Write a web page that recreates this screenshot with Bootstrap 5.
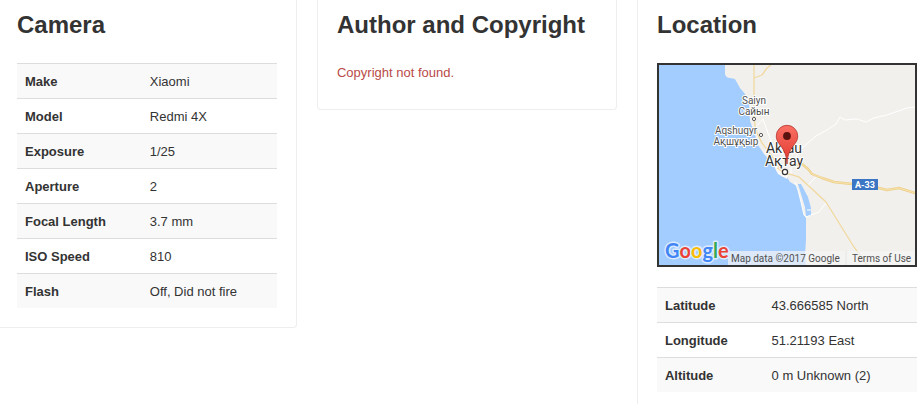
<!DOCTYPE html>
<html lang="en">
<head>
<meta charset="utf-8">
<meta name="viewport" content="width=device-width, initial-scale=1">
<title>Photo details</title>
<link rel="stylesheet" href="https://cdn.jsdelivr.net/npm/bootstrap@5.3.0/dist/css/bootstrap.min.css">
<style>
body { font-family: "Liberation Sans", Arial, sans-serif; font-size: 13px; line-height: 18px; color: #333; }
.info-row { --bs-gutter-x: 20px; margin-left: -13px; margin-right: -23px; }
.info-card { border: 1px solid #eee; border-top: 0; border-radius: 0 0 4px 4px; padding: 7px 19px 19px; }
.info-title { font-size: 24px; line-height: 36px; margin-bottom: 20px; color: #333; }
.info-table { --bs-table-striped-bg: #f9f9f9; --bs-table-color: #333; --bs-table-striped-color: #333; }
.info-table > tbody > tr > * { border-width: 1px 0 0; border-color: #ddd; padding: 9px 8px 7px; }
.w-key { width: 48%; }
.w-key-sm { width: 41%; }
.missing { color: #b94a48; padding-top: 1px; margin-bottom: 8px; }
.map-box { border: 2px solid #333; background: #f1f0ed; margin-bottom: 20px; }
.map-box text { font-family: Roboto, "Noto Sans", sans-serif; }
.map-town { font-size: 10px; text-anchor: middle; fill: #505050; stroke: #fff; stroke-width: 2px; paint-order: stroke; stroke-linejoin: round; }
.map-city { font-size: 14px; fill: #333; }
.map-note { font-size: 10px; fill: #505050; }
.map-shield { font-size: 9px; font-weight: 700; text-anchor: middle; fill: #fff; }
.map-box .map-brand { font-family: Lato, sans-serif; font-size: 20px; font-weight: 700; stroke: #dcebff; stroke-width: 3px; paint-order: stroke; stroke-linejoin: round; }
</style>
</head>
<body>
<main class="overflow-hidden">
<div class="row info-row align-items-start">
  <section class="col-4">
    <div class="info-card">
      <h2 class="info-title fw-bold">Camera</h2>
      <table class="table table-striped info-table mb-0">
        <tbody>
          <tr><th scope="row" class="w-key">Make</th><td>Xiaomi</td></tr>
          <tr><th scope="row">Model</th><td>Redmi 4X</td></tr>
          <tr><th scope="row">Exposure</th><td>1/25</td></tr>
          <tr><th scope="row">Aperture</th><td>2</td></tr>
          <tr><th scope="row">Focal Length</th><td>3.7 mm</td></tr>
          <tr><th scope="row">ISO Speed</th><td>810</td></tr>
          <tr><th scope="row">Flash</th><td>Off, Did not fire</td></tr>
        </tbody>
      </table>
    </div>
  </section>
  <section class="col-4">
    <div class="info-card">
      <h2 class="info-title fw-bold">Author and Copyright</h2>
      <p class="missing">Copyright not found.</p>
    </div>
  </section>
  <section class="col-4">
    <div class="info-card">
      <h2 class="info-title fw-bold">Location</h2>
      <div class="map-box">
        <svg class="d-block w-100" viewBox="0 0 256 200" aria-label="Map of Aktau">
          <defs>
            <linearGradient id="pinFill" x1="0" y1="0" x2="0" y2="1">
              <stop offset="0" stop-color="#fb7064"/>
              <stop offset="1" stop-color="#e0362d"/>
            </linearGradient>
          </defs>
          <!-- land and sea -->
          <rect width="256" height="200" fill="#f1f0ed"/>
          <path fill="#a3ccff" d="M0 0H66V9Q67 13 71 13L76 14 81 23 86 29 90 39 91 56 96 70 99 80 105 89 114 99 118 107 124 112 128 112 131 117 138 121 142 137 145 150 147 153 147 175 146 190 147 200H0Z"/>
          <path fill="#fbfaf8" d="M114 98 124 104 129 110 128 114 119 109Z"/>
          <path fill="#a3ccff" d="M139 119 142 119 149 132 152 143V151H147L146 142Z"/>
          <path fill="none" stroke="#fff" stroke-width="1" d="M136 117 139 125 142 137 145 150 148 153 M148 145 152 145"/>
          <!-- minor roads -->
          <g fill="none" stroke="#fff" stroke-width="1">
            <path d="M137 92 143 83 157 71 168 65 177 59 181 52 186 55 198 54 207 57 215 53 228 50 248 43 256 42"/>
            <path d="M95 64 104 54 109 68 117 88M157 112 149 120M167 138 160 147 147 152M132 98V110"/>
          </g>
          <!-- main roads -->
          <g fill="none" stroke="#f1d9a0" stroke-width="1.3" stroke-linejoin="round">
            <path d="M95 0V54L97 66 103 78 112 90 121 104M95 13 103 10 108 3 112 0"/>
            <path d="M118 103 126 108 140 112 152 123 167 137 195 182 208 200"/>
          </g>
          <path fill="none" stroke="#eccf8a" stroke-width="2.4" stroke-linejoin="round" d="M131 101 136 100 143 99 149 104 153 109 163 113 175 117 193 119 220 123 228 125 240 123 256 128"/>
          <path fill="none" stroke="#f8e3ad" stroke-width="1" stroke-linejoin="round" d="M131 101 136 100 143 99 149 104 153 109 163 113 175 117 193 119 220 123 228 125 240 123 256 128"/>
          <rect x="193" y="114" width="26" height="11" fill="#3b76c4"/>
          <text class="map-shield" x="206" y="123">A-33</text>
          <!-- towns -->
          <g fill="#fff" stroke="#555" stroke-width="1">
            <circle cx="95" cy="54" r="1.6"/>
            <circle cx="102" cy="70" r="1.6"/>
            <circle cx="126" cy="107" r="2.6" stroke="#333" stroke-width="1.2"/>
          </g>
          <text class="map-town" x="95" y="39">Saiyn</text>
          <text class="map-town" x="95" y="50">Сайын</text>
          <text class="map-town" x="77" y="69">Aqshuqyr</text>
          <text class="map-town" x="77" y="80">Ақшұқыр</text>
          <text class="map-town map-city" x="125" y="88">Aktau</text>
          <text class="map-town map-city" x="125" y="101">Ақтау</text>
          <!-- marker -->
          <path fill="url(#pinFill)" stroke="#b3342c" stroke-width=".8" d="M128 99C127.500 88 124 84 120 78.500 118 76 117.300 73.500 117.300 71A10.700 10.700 0 0 1 138.700 71C138.700 73.500 138 76 136 78.500 132 84 128.500 88 128 99Z"/>
          <circle cx="128" cy="71" r="3.900" fill="#5c120e"/>
          <!-- attribution -->
          <rect x="69" y="186" width="187" height="14" fill="#f5f5f5" fill-opacity=".7"/>
          <path d="M187 186V200" stroke="#e6e6e4"/>
          <text class="map-brand" x="6" y="193"><tspan fill="#4285f4">G</tspan><tspan fill="#ea4335">o</tspan><tspan fill="#fbbc05">o</tspan><tspan fill="#4285f4">g</tspan><tspan fill="#34a853">l</tspan><tspan fill="#ea4335">e</tspan></text>
          <text class="map-note" x="72" y="197">Map data ©2017 Google</text>
          <a href="#terms" class="text-decoration-none"><text class="map-note" x="193" y="197">Terms of Use</text></a>
        </svg>
      </div>
      <table class="table table-striped info-table mb-0">
        <tbody>
          <tr><th scope="row" class="w-key-sm">Latitude</th><td>43.666585 North</td></tr>
          <tr><th scope="row">Longitude</th><td>51.21193 East</td></tr>
          <tr><th scope="row">Altitude</th><td>0 m Unknown (2)</td></tr>
        </tbody>
      </table>
    </div>
  </section>
</div>
</main>
<script src="https://cdn.jsdelivr.net/npm/bootstrap@5.3.0/dist/js/bootstrap.bundle.min.js"></script>
</body>
</html>
